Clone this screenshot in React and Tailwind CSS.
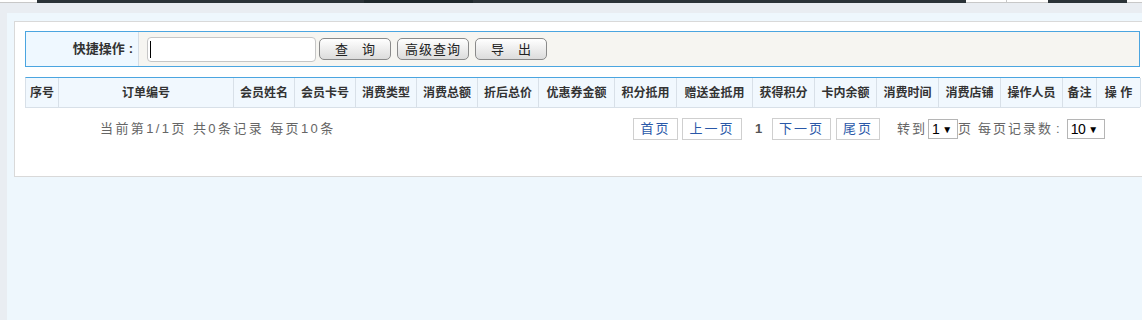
import React from 'react';

const columns = [
  { title: '序号', w: 'w-[33px]' },
  { title: '订单编号', w: 'w-[175px]' },
  { title: '会员姓名', w: 'w-[61px]' },
  { title: '会员卡号', w: 'w-[61px]' },
  { title: '消费类型', w: 'w-[61px]' },
  { title: '消费总额', w: 'w-[61px]' },
  { title: '折后总价', w: 'w-[61px]' },
  { title: '优惠券金额', w: 'w-[76px]' },
  { title: '积分抵用', w: 'w-[62px]' },
  { title: '赠送金抵用', w: 'w-[76px]' },
  { title: '获得积分', w: 'w-[62px]' },
  { title: '卡内余额', w: 'w-[62px]' },
  { title: '消费时间', w: 'w-[62px]' },
  { title: '消费店铺', w: 'w-[62px]' },
  { title: '操作人员', w: 'w-[62px]' },
  { title: '备注', w: 'w-[34px]' },
  { title: '操 作', w: 'w-[44px]' },
];

const ActionButton = ({ children, className = '' }) => (
  <button
    className={`h-[22px] w-[72px] rounded-[5px] border border-[#8a8a8a] bg-gradient-to-b from-white to-[#dcdcdc] text-[13px] text-[#222] leading-none ${className}`}
  >
    {children}
  </button>
);

const PageButton = ({ children, className = '' }) => (
  <span
    className={`flex h-[22px] items-center justify-center border border-[#cfcfcf] bg-white text-[13px] tracking-[2px] text-[#2a58a8] ${className}`}
  >
    {children}
  </span>
);

const FakeSelect = ({ value, className = '' }) => (
  <span
    className={`flex h-[20px] items-center border border-[#b5b5b5] bg-white pl-[3px] text-[14px] text-black ${className}`}
  >
    <span className="tracking-[-0.5px]">{value}</span>
    <span className="ml-[3px] text-[10px]">▼</span>
  </span>
);

const App = () => {
  return (
    <div className="h-[320px] w-[1142px] overflow-hidden bg-[#e9edf2] font-['Liberation_Sans','Noto_Sans_CJK_SC',sans-serif]">
      {/* top menu edge (cut off) */}
      <div className="flex h-[3px]">
        <div className="w-[37px] border-b border-[#c8c8c8] bg-white" />
        <div className="w-[327px] bg-[#2b3338]" />
        <div className="w-[109px] bg-[#1e282c]" />
        <div className="w-[493px] bg-[#2b3338]" />
        <div className="w-[41px] border-b border-r border-[#c8c8c8] bg-white" />
        <div className="w-[41px] border-b border-[#c8c8c8] bg-white" />
        <div className="w-[79px] bg-[#2b3338]" />
        <div className="flex-1 border-b border-[#c8c8c8] bg-white" />
      </div>

      <div className="ml-[7px] mt-[10px] h-[307px] w-[1200px] bg-[#eef7fd] pl-[7px] pt-[8px]">
        <div className="h-[156px] w-[1137px] border border-[#d9d9d9] bg-white pl-[10px] pt-[9px]">
          {/* quick search */}
          <div className="flex h-[36px] w-[1115px] border border-[#4ba5e0] bg-[#f6f5f1]">
            <div className="flex w-[113px] items-center justify-end border-r border-[#d5dde5] bg-[#eff8ff] pr-[5px] text-[13px] font-bold text-[#333]">
              快捷操作<span className="ml-[4px]">:</span>
            </div>
            <div className="flex items-center">
              <div className="ml-[8px] flex h-[25px] w-[169px] items-center rounded-[4px] border border-[#c6c6c6] bg-white pl-[2px]">
                <span className="h-[17px] w-px bg-black" />
              </div>
              <ActionButton className="ml-[3px] tracking-[14px] pl-[14px]">查询</ActionButton>
              <ActionButton className="ml-[6px] tracking-[1px]">高级查询</ActionButton>
              <ActionButton className="ml-[6px] tracking-[14px] pl-[14px]">导出</ActionButton>
            </div>
          </div>

          {/* table header */}
          <div className="mt-[10px] flex h-[31px] w-[1115px] border-l border-t border-b border-t-[#4ba5e0] border-l-[#d8e0e8] border-b-[#d8e0e8] bg-[#f1f8fe]">
            {columns.map((col, i) => (
              <div
                key={i}
                className={`${col.w} flex shrink-0 items-center justify-center border-r border-[#d8e0e8] text-[12px] font-bold text-[#333]`}
              >
                {col.title}
              </div>
            ))}
          </div>

          {/* pager */}
          <div className="mt-[10px] flex w-[1115px] items-center">
            <div className="w-[608px] pl-[75px] text-[13px] tracking-[2.4px] text-[#666]">
              当前第1/1页 共0条记录 每页10条
            </div>
            <PageButton className="w-[45px]">首页</PageButton>
            <PageButton className="ml-[4px] w-[60px]">上一页</PageButton>
            <span className="ml-[13px] w-[17px] text-[13px] font-bold text-[#555]">1</span>
            <PageButton className="w-[59px]">下一页</PageButton>
            <PageButton className="ml-[5px] w-[44px]">尾页</PageButton>
            <span className="ml-[17px] text-[13px] tracking-[2px] text-[#666]">转到</span>
            <FakeSelect value="1" className="ml-[1px] w-[30px]" />
            <span className="text-[13px] tracking-[2px] text-[#666]">页</span>
            <span className="ml-[5px] text-[13px] tracking-[2px] text-[#666]">
              每页记录数<span className="ml-[3px] mr-[3px]">:</span>
            </span>
            <FakeSelect value="10" className="ml-[2px] w-[38px]" />
          </div>
        </div>
      </div>
    </div>
  );
};

export default App;
